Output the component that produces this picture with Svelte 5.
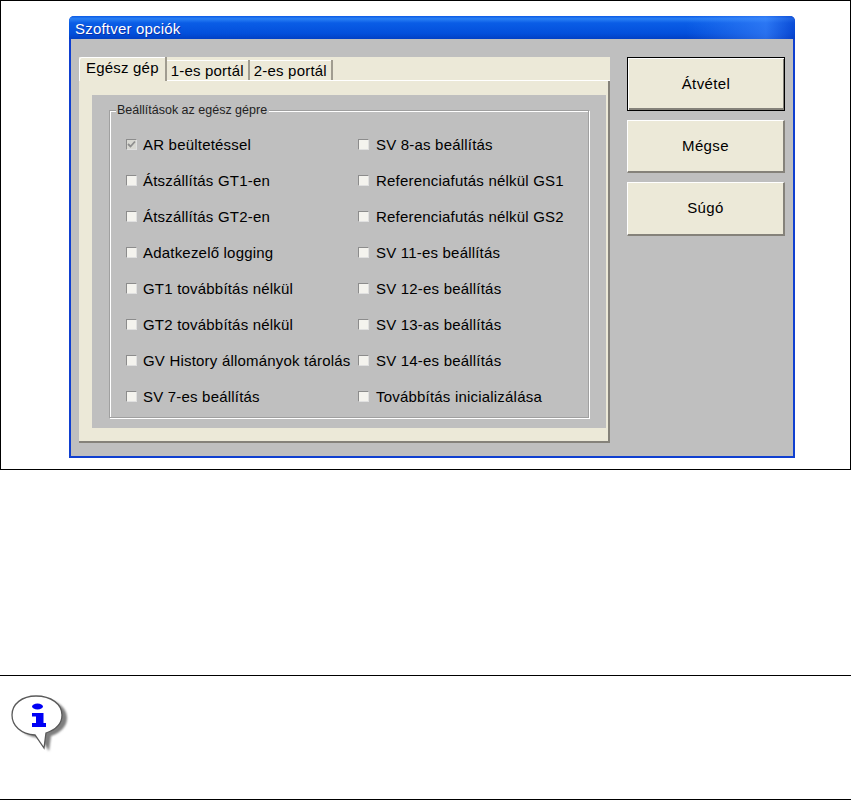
<script lang="ts">
    const tabs = ['Egész gép', '1-es portál', '2-es portál'];
    const buttons = ['Átvétel', 'Mégse', 'Súgó'];
    // listed column by column, the grid flows them the same way
    const options = [
        { label: 'AR beültetéssel', checked: true },
        { label: 'Átszállítás GT1-en' },
        { label: 'Átszállítás GT2-en' },
        { label: 'Adatkezelő logging' },
        { label: 'GT1 továbbítás nélkül' },
        { label: 'GT2 továbbítás nélkül' },
        { label: 'GV History állományok tárolás' },
        { label: 'SV 7-es beállítás' },
        { label: 'SV 8-as beállítás' },
        { label: 'Referenciafutás nélkül GS1' },
        { label: 'Referenciafutás nélkül GS2' },
        { label: 'SV 11-es beállítás' },
        { label: 'SV 12-es beállítás' },
        { label: 'SV 13-as beállítás' },
        { label: 'SV 14-es beállítás' },
        { label: 'Továbbítás inicializálása' }
    ];
</script>

<div class="frame">
    <div class="window">
        <div class="titlebar">Szoftver opciók</div>
        <div class="client">
            <div class="tabs-area">
                <div class="tabs">
                    {#each tabs as tab, i}
                        <div class="tab" class:active={i === 0}>{tab}</div>
                    {/each}
                </div>
                <div class="panel">
                    <div class="inner">
                        <div class="group">
                            <span class="legend">Beállítások az egész gépre</span>
                            <div class="options">
                                {#each options as opt}
                                    <div class="option">
                                        <span class="box" class:checked={opt.checked}>
                                            {#if opt.checked}
                                                <svg width="9" height="9" viewBox="0 0 9 9">
                                                    <path d="M1 4 L3.5 6.5 L8 1.5" fill="none" stroke="#8e8e8e" stroke-width="1.8" />
                                                </svg>
                                            {/if}
                                        </span>
                                        <span>{opt.label}</span>
                                    </div>
                                {/each}
                            </div>
                        </div>
                    </div>
                </div>
            </div>
            <div class="buttons">
                {#each buttons as btn, i}
                    <div class="btn" class:default={i === 0}>{btn}</div>
                {/each}
            </div>
        </div>
    </div>
</div>

<div class="note">
    <svg width="64" height="64" viewBox="0 0 64 64">
        <defs>
            <filter id="soft" x="-10%" y="-10%" width="120%" height="120%">
                <feGaussianBlur stdDeviation="1" />
            </filter>
            <filter id="crisp" x="-5%" y="-5%" width="110%" height="110%">
                <feGaussianBlur stdDeviation="0.35" />
            </filter>
        </defs>
        <path d="M28 6 C43 6 54 14 54 25 C54 34 47 40 38 43 L36 58 L27 45 C13 44 4 36 4 25 C4 14 14 6 28 6 Z"
            transform="translate(5 3)" fill="#7e7e7e" filter="url(#soft)" />
        <g filter="url(#crisp)">
            <path d="M28 6 C43 6 54 14 54 25 C54 34 47 40 38 43 L36 58 L27 45 C13 44 4 36 4 25 C4 14 14 6 28 6 Z"
                fill="#fff" stroke="#5a5a5a" stroke-width="1.3" />
            <ellipse cx="29.5" cy="16.5" rx="5.5" ry="2.9" fill="#0000f5" />
            <path d="M24 23 H35.5 V33 H38 V37 H24 V33 H28 V26.5 H24 Z" fill="#0000f5" />
        </g>
    </svg>
</div>

<style>
    :global(body) {
        margin: 0;
        background: #fff;
        font-family: "Liberation Sans", Arial, sans-serif;
    }

    .frame {
        box-sizing: border-box;
        height: 470px;
        border: 1px solid #000;
        padding: 15px 0 0 68px;
    }

    .window {
        box-sizing: border-box;
        width: 726px;
        height: 442px;
        border: solid #0f3fd0;
        border-width: 0 2px 2px 2px;
        border-radius: 5px 5px 0 0;
        background: #bfbfbf;
        display: flex;
        flex-direction: column;
    }

    .titlebar {
        height: 23px;
        margin: 0 -2px;
        padding-left: 6px;
        line-height: 25px;
        font-size: 15px;
        letter-spacing: 0.2px;
        color: #fff;
        text-shadow: 1px 1px 0 #0a2fa8;
        border-radius: 5px 5px 0 0;
        background:
            linear-gradient(90deg, transparent 85%, rgba(70, 140, 255, 0.55) 96%, rgba(10, 60, 200, 0.5)),
            linear-gradient(#0b5ae6, #2a80f4 12%, #0a5de6 30%, #0350dc 75%, #0240c4);
    }

    .client {
        display: flex;
        padding: 18px 0 0 8px;
    }

    .tabs-area {
        width: 531px;
    }

    .tabs {
        display: flex;
        height: 24px;
        background: #ece9d8;
        font-size: 15px;
        letter-spacing: 0.2px;
        box-shadow: inset 0 -1px 0 #fff;
        color: #000;
    }

    .tab {
        margin: 3px 0 1px;
        padding: 2px 4px 0;
        border-right: 2px solid #a09c90;
        box-shadow: inset 0 1px 0 #fff;
        line-height: 17px;
        white-space: nowrap;
    }

    .tab.active {
        margin: 0;
        padding: 2px 6px 0;
        background: #ece9d8;
        border-left: 1px solid #fff;
        border-radius: 3px 0 0 0;
    }

    .panel {
        box-sizing: border-box;
        height: 362px;
        padding: 14px 0 13px 13px;
        background: #ece9d8;
        border-right: 2px solid #85827a;
        border-bottom: 2px solid #85827a;
    }

    .inner {
        box-sizing: border-box;
        width: 514px;
        height: 333px;
        background: #bfbfbf;
        padding: 15px 0 0 17px;
    }

    .group {
        position: relative;
        box-sizing: border-box;
        width: 480px;
        height: 308px;
        border: 1px solid #a0a0a0;
        box-shadow: 1px 1px 0 #fff, inset 1px 1px 0 #fff;
    }

    .legend {
        position: absolute;
        top: -8px;
        left: 6px;
        padding: 0 2px 0 1px;
        background: #bfbfbf;
        font-size: 12.5px;
        line-height: 15px;
        color: #222;
    }

    .options {
        display: grid;
        grid-template-columns: 232px 1fr;
        grid-template-rows: repeat(8, 36px);
        grid-auto-flow: column;
        padding: 15px 0 0 16px;
    }

    .option {
        display: flex;
        align-items: center;
        font-size: 15px;
        letter-spacing: 0.2px;
        white-space: nowrap;
        color: #000;
    }

    .option:nth-child(n + 9) .box {
        margin-right: 7px;
    }

    .box {
        box-sizing: border-box;
        flex: none;
        width: 11px;
        height: 11px;
        margin-right: 6px;
        display: flex;
        align-items: center;
        justify-content: center;
        background: #f4f3ee;
        border: 1px solid #8c8c8c;
        border-right-color: #e0e0e0;
        border-bottom-color: #e0e0e0;
    }

    .box.checked {
        background: #d8d8d2;
    }

    .buttons {
        display: flex;
        flex-direction: column;
        margin-left: 17px;
        gap: 9px;
    }

    .btn {
        box-sizing: border-box;
        width: 158px;
        height: 54px;
        padding-bottom: 2px;
        display: flex;
        align-items: center;
        justify-content: center;
        font-size: 15px;
        letter-spacing: 0.4px;
        color: #000;
        background: #ece9d8;
        border: solid;
        border-width: 1px 2px 2px 1px;
        border-color: #fff #85827a #85827a #fff;
    }

    .btn:nth-child(2) {
        height: 53px;
    }

    .btn.default {
        border: 1px solid #000;
        box-shadow: inset 1px 1px 0 #fff, inset -1px -2px 0 #85827a;
    }

    .note {
        box-sizing: border-box;
        height: 125px;
        margin-top: 205px;
        border-top: 1px solid #000;
        border-bottom: 1px solid #000;
        padding: 14px 0 0 8px;
    }

    .note svg {
        display: block;
    }
</style>
